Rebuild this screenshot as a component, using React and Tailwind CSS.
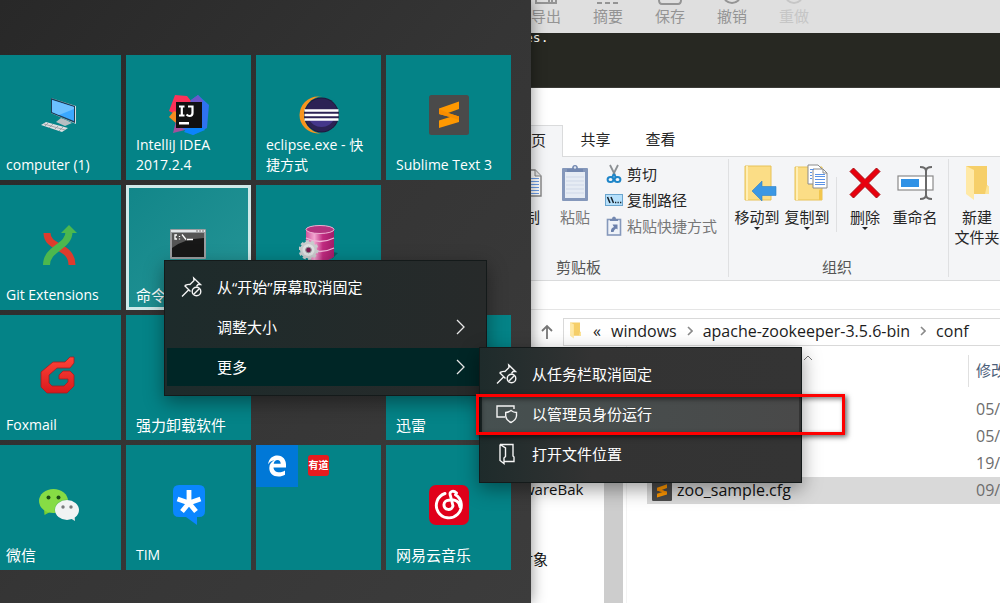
import React from "react";

/* ---------- tile icons (40 x 40) ---------- */

const ComputerIcon = () => (
  <svg width="40" height="40" viewBox="0 0 40 40">
    <path d="M12 3 37 11 V29 L12 18Z" fill="#d5dde0" />
    <path d="M12 3 36 11 V28 L12 18Z" fill="#1d3f59" />
    <path d="M13 5 35 12 V26 L13 17Z" fill="#3aa8ff" />
    <path d="M13 5 35 12 V14 L20 20 13 17Z" fill="#6cc1ff" />
    <path d="M22 23 27 25 33 28 26 31 17 27Z" fill="#b8bec2" />
    <path d="M7 27 29 33 23 37 2 30Z" fill="#dcdfe1" />
    <path d="M5 29 26 35M9 28 L6 31M14 29 L10 33M19 31 L15 35M24 32 L20 36" stroke="#8f979c" strokeWidth="0.8" />
  </svg>
);

const IntelliJIcon = () => (
  <svg width="40" height="40" viewBox="0 0 40 40">
    <path d="M6 0 18 1 27 12 12 22 0 16Z" fill="#fc3158" />
    <path d="M0 22 5 16 14 20 8 29Z" fill="#f68b1f" />
    <path d="M4 38 8 22 20 22 20 34Z" fill="#a5509c" />
    <path d="M22 5 29 0 40 10 38 33 24 40 13 33Z" fill="#2f72f0" />
    <path d="M22 5 29 0 34 6 24 16Z" fill="#6b57c8" />
    <path d="M17 34 33 31 36 35 24 40 15 37Z" fill="#0b84fb" />
    <rect x="7" y="7" width="26" height="26" fill="#111" />
    <path d="M10 11.500H15.500M12.800 11V20M10 20.500H15.500M23.500 10.500V18Q23.500 21 20.500 21Q19 21 17.500 19.500M19 11.500H24" stroke="#fff" strokeWidth="2.200" fill="none" />
    <rect x="10" y="27" width="10" height="2.500" fill="#fff" />
  </svg>
);

const EclipseIcon = () => (
  <svg width="40" height="40" viewBox="0 0 40 40">
    <circle cx="19" cy="20" r="18.500" fill="#f7941e" />
    <circle cx="24" cy="20" r="18.800" fill="#048387" />
    <circle cx="22.500" cy="20" r="17.500" fill="#1f1a3d" />
    <circle cx="22.500" cy="20" r="16.500" fill="#2c2255" />
    <path d="M10 24H35A13 11 0 0 1 10 24Z" fill="#45378b" />
    <path d="M5.500 15.500H39.500M5.500 20H39.500M5.500 24.500H39.500" stroke="#fff" strokeWidth="2.300" />
  </svg>
);

const SublimeIcon = ({ size = 40 }) => (
  <svg width={size} height={size} viewBox="0 0 40 40">
    <rect width="40" height="40" rx="2.500" fill="#4a4a4a" />
    <path d="M10 13.500 30 6.500V14L19 18 30 21.500V27L10 33V25.500L21 22 10 19Z" fill="#ff9800" />
    <path d="M10 19 21 22 30 25V21.500L19 18 10 14Z" fill="#f98d00" />
  </svg>
);

const GitIcon = () => (
  <svg width="40" height="40" viewBox="0 0 40 40">
    <path d="M8 8C8 24 33 20 33 40" stroke="#dd3b2d" strokeWidth="7" fill="none" />
    <path d="M7.500 40C7.500 23 30 22 30 7" stroke="#4cb84e" strokeWidth="7" fill="none" />
    <path d="M30 0 38 8H22Z" fill="#4cb84e" />
  </svg>
);

const CmdIcon = () => (
  <svg width="40" height="40" viewBox="0 0 40 40">
    <rect x="1" y="4" width="36" height="30" rx="1" fill="#9a9da0" />
    <rect x="2" y="5" width="34" height="2" fill="#e3e6e8" />
    <rect x="3" y="8" width="32" height="24" fill="#171717" />
    <path d="M3 8H35V13Q14 14 3 23Z" fill="#555" />
    <path d="M8 10H6V14H8M10.500 11V12M10.500 13.500V14.500M13 9.500 17 14.500M18 14.500H24" stroke="#fff" strokeWidth="1.300" fill="none" />
    <path d="M27 6H29M30 6H32M33 6H35" stroke="#777" />
  </svg>
);

const DatabaseIcon = () => (
  <svg width="40" height="40" viewBox="0 0 40 40">
    <defs>
      <linearGradient id="db" x1="0" x2="1">
        <stop offset="0" stopColor="#d0559c" />
        <stop offset=".3" stopColor="#f2a4d0" />
        <stop offset=".6" stopColor="#c02a80" />
        <stop offset="1" stopColor="#a21c68" />
      </linearGradient>
    </defs>
    <path d="M33 34 39 28 34 27Z" fill="#055d63" />
    <path d="M7 4V32Q21 41 35 32V4Z" fill="url(#db)" />
    <ellipse cx="21" cy="4.500" rx="14" ry="4" fill="#b2347f" stroke="#eeb0d3" />
    <path d="M7 13Q21 20 35 13M7 23Q21 30 35 23" stroke="#efb4d6" strokeWidth="1.300" fill="none" />
    <circle cx="9.500" cy="25" r="8.500" fill="#c9cccd" stroke="#c9cccd" strokeWidth="3" strokeDasharray="3 2.300" />
    <circle cx="9.500" cy="25" r="6" fill="#dfe1e2" />
    <circle cx="9.500" cy="25" r="2.800" fill="#7b1b50" stroke="#8e9193" />
  </svg>
);

const FoxmailIcon = () => (
  <svg width="40" height="40" viewBox="0 0 40 40">
    <defs>
      <linearGradient id="fox" x1="0" y1="0" x2="0" y2="1">
        <stop offset="0" stopColor="#ff4438" />
        <stop offset="1" stopColor="#d9191c" />
      </linearGradient>
    </defs>
    <path d="M35 2V8L31 13H18L10 20V28L13 31H25L29 27V24H20V20L24 16H31L35 20V31L28 38H8L2 32V17L14 7H26L31 2Z" fill="url(#fox)" stroke="#9e2024" strokeWidth=".8" />
  </svg>
);

const WeChatIcon = () => (
  <svg width="40" height="40" viewBox="0 0 40 40">
    <path d="M5 24 5.500 30 11 27Z" fill="#79cf2f" />
    <ellipse cx="14.500" cy="16" rx="14.500" ry="12" fill="#86dc45" />
    <ellipse cx="28" cy="25" rx="12.500" ry="10.500" fill="#048387" opacity=".25" />
    <path d="M31 33 36 36 35.500 30Z" fill="#e4e7e8" />
    <ellipse cx="28" cy="25" rx="12" ry="10" fill="#f1f3f3" />
    <circle cx="9.500" cy="12.500" r="2" fill="#1c4d17" />
    <circle cx="19.500" cy="12.500" r="2" fill="#1c4d17" />
    <circle cx="24" cy="22" r="1.700" fill="#777b7b" />
    <circle cx="32" cy="22" r="1.700" fill="#777b7b" />
  </svg>
);

const TimIcon = () => (
  <svg width="40" height="40" viewBox="0 0 40 40">
    <path d="M10 0H30Q36 0 36 6V26Q36 32 30 32H28V40L17 32H10Q4 32 4 26V6Q4 0 10 0Z" fill="#0a86ff" />
    <path d="M20 18V5M20 18 8.500 14M20 18 31.500 14M20 18 13 26.500M20 18 27 26.500" stroke="#fff" strokeWidth="4.800" />
  </svg>
);

const NetEaseIcon = () => (
  <svg width="40" height="40" viewBox="0 0 40 40">
    <rect width="40" height="40" rx="7" fill="#e0001b" />
    <path d="M16.500 9.500A12.500 12.500 0 1 0 27 10.800M28 9C25 6 20 7 22 12L24.500 22A4.600 4.600 0 1 1 20 16.300C26 14.500 31.500 18 31.500 23" transform="translate(-0.500 -1)" stroke="#fff" strokeWidth="2.900" fill="none" strokeLinecap="round" />
  </svg>
);

const EdgeIcon = () => (
  <svg width="20" height="22" viewBox="0 0 20 22">
    <path d="M1 9.500C2 3 6 .5 10.500.5C16 .5 19 5 19 9.500V12.500H6.500C6.800 16 9.500 17.300 12 17.300C14.500 17.300 16.500 16.500 18 15.500V19.700C16 20.900 13.800 21.500 11.500 21.500C6 21.500 2.300 18 2.300 13C2.300 9 4.500 6.500 7.500 5.200C4.500 5.500 2.500 7 1 9.500ZM6.700 8.800H13.700C13.700 6.500 12.500 5 10.500 5C8.500 5 7 6.500 6.700 8.800Z" fill="#fff" />
  </svg>
);

/* ---------- ribbon and window icons ---------- */

const Clipboard = () => (
  <svg width="28" height="38" viewBox="0 0 28 38">
    <rect x="1" y="4" width="26" height="33" rx="1" fill="#8598bb" />
    <rect x="4" y="8" width="20" height="26" fill="#e6ecf4" />
    <path d="M5 13H23M5 17H23M5 21H23M5 25H23M5 29H23" stroke="#cfd8e8" />
    <path d="M6 8V5H11Q11 1 14 1Q17 1 17 5H22V8Z" fill="#7388b0" />
    <circle cx="14" cy="3.500" r="1.200" fill="#dfe6f2" />
  </svg>
);

const CopyDoc = () => (
  <svg width="22" height="28" viewBox="0 0 22 28">
    <path d="M1 1H13L19 7V27H1Z" fill="#fff" stroke="#848484" strokeWidth="1.400" />
    <path d="M13 1V7H19" fill="#e6e6e6" stroke="#848484" />
    <path d="M3 9.500H17M3 12.500H17M3 15.500H17M3 18.500H17M3 21.500H17M3 24.500H17" stroke="#6d9ee8" />
  </svg>
);

const Scissors = () => (
  <svg width="18" height="20" viewBox="0 0 18 20">
    <path d="M5 1 10 11M13 1 8 11" stroke="#8b8f93" strokeWidth="1.800" fill="none" />
    <ellipse cx="5.500" cy="15.500" rx="2.900" ry="2.500" fill="none" stroke="#1e85c8" strokeWidth="2" />
    <ellipse cx="12.500" cy="15.500" rx="2.900" ry="2.500" fill="none" stroke="#1e85c8" strokeWidth="2" />
    <path d="M9 10 7 13.500M9 10 11 13.500" stroke="#1e85c8" strokeWidth="2" />
  </svg>
);

const PathIcon = () => (
  <svg width="18" height="12" viewBox="0 0 18 12">
    <rect x=".5" y=".5" width="17" height="11" fill="#b6e0fb" stroke="#6aa5ce" />
    <path d="M2.500 3 5 9M6 3 8.500 9" stroke="#16222c" strokeWidth="1.500" />
    <path d="M10 8.500H11.300M12.500 8.500H13.800M15 8.500H16.300" stroke="#16222c" strokeWidth="1.300" />
  </svg>
);

const PasteShortcut = () => (
  <svg width="16" height="20" viewBox="0 0 16 20">
    <rect x="1.500" y="3.500" width="13" height="15.500" fill="#eef2f8" stroke="#8598bb" strokeWidth="1.600" />
    <path d="M4 5V3H6Q6 .5 8 .5Q10 .5 10 3H12V5Z" fill="#7388b0" />
    <path d="M5 16Q4.500 12 8 11L6.500 8.500H11.500V13.500L10 12.500Q8 13.500 7.500 16Z" fill="#6b80ab" />
  </svg>
);

const MoveFolder = () => (
  <svg width="34" height="38" viewBox="0 0 34 38" className="ml-2">
    <path d="M1 2H27V36H5L1 36Z" fill="#fbdd86" stroke="#e7c257" />
    <path d="M2 2H4V36H2Z" fill="#ffefb5" />
    <path d="M8 27 18 17V22.500H32V31.500H18V37Z" fill="#3b97e3" stroke="#2a7fc8" strokeWidth=".6" />
  </svg>
);

const CopyFolder = () => (
  <svg width="34" height="38" viewBox="0 0 34 38" className="ml-2">
    <path d="M1 3H28V36H1Z" fill="#fbdd86" stroke="#e7c257" />
    <path d="M2 3H4V36H2Z" fill="#ffefb5" />
    <path d="M25 36V27Q25 25 28 25V36Z" fill="#f2c64e" />
    <path d="M14 1H24L28 5V20H14Z" fill="#fff" stroke="#8b8b8b" />
    <path d="M19 5H29L33 9V24H19Z" fill="#fff" stroke="#8b8b8b" />
    <path d="M29 5V9H33" fill="none" stroke="#8b8b8b" />
    <path d="M16 5.500H20M16 8.500H18M16 11.500H18M16 14.500H18M21 10.500H31M21 12.500H31M21 15.500H31M21 18.500H31M21 20.500H31" stroke="#5b93e6" />
  </svg>
);

const DeleteX = () => (
  <svg width="32" height="32" viewBox="0 0 32 32">
    <path d="M4.500 1 16 12.500 27.500 1 31 4.500 19.500 16 31 27.500 27.500 31 16 19.500 4.500 31 1 27.500 12.500 16 1 4.500Z" fill="#e8000d" stroke="#a80c12" />
  </svg>
);

const RenameIcon = () => (
  <svg width="38" height="34" viewBox="0 0 38 34" className="ml-[2px]">
    <rect x="1" y="10" width="35" height="14" fill="#fff" stroke="#8a8a8a" strokeWidth="1.200" />
    <rect x="4" y="13" width="18" height="8" fill="#2f91e5" />
    <path d="M23 1Q29 1 29 5Q29 1 35 1M29 4V30M23 33Q29 33 29 29Q29 33 35 33" stroke="#6a6a6a" strokeWidth="2" fill="none" />
  </svg>
);

const Folder = ({ w = 25, h = 36 }) => (
  <svg width={w} height={h} viewBox="0 0 25 36">
    <path d="M1 1H22V20L24 22V29H5Z" fill="#f6cf69" />
    <path d="M22 20 24 22V29H20Z" fill="#fde59a" />
    <path d="M1 1 9 5V35L1 29Z" fill="#ffe9a6" />
  </svg>
);

const UnpinIcon = () => (
  <svg width="22" height="22" viewBox="0 0 22 22" fill="none" stroke="#f4f4f4" strokeWidth="1.400">
    <path d="M1 20.500 7.500 14M3.500 9.500 9.500 15.500M4 9.500Q7.500 8 9 8.500L13 4.500L12.700 2 19.500 8.500 17 8.500 15.500 10.500" />
    <circle cx="15.500" cy="15.500" r="4.300" />
    <path d="M12.500 18.500 18.500 12.500" />
  </svg>
);

const AdminIcon = () => (
  <svg width="22" height="20" viewBox="0 0 22 20" fill="none" stroke="#f4f4f4" strokeWidth="1.400">
    <path d="M9 13H1V2H18V5" />
    <path d="M15 6.500Q17.500 8.500 20.500 8.500V12Q20 16 15 18.500Q10 16 9.700 12V8.500Q12.500 8.500 15 6.500Z" />
  </svg>
);

const LocationIcon = () => (
  <svg width="18" height="22" viewBox="0 0 18 22" fill="none" stroke="#f4f4f4" strokeWidth="1.400">
    <path d="M2 1.500H15V13L16 14V18.500H6M2 1.500V17.500L6 20.500V15L7.500 13.500V5L2 1.500" />
  </svg>
);

const Chevron = () => (
  <svg width="10" height="16" viewBox="0 0 10 16" fill="none" stroke="#e8e8e8" strokeWidth="1.300">
    <path d="M1 1 8 8 1 15" />
  </svg>
);

/* ---------- start menu ---------- */

const tiles = [
  { label: "computer (1)", icon: <ComputerIcon /> },
  { label: "IntelliJ IDEA 2017.2.4", icon: <IntelliJIcon /> },
  { label: "eclipse.exe - 快捷方式", icon: <EclipseIcon /> },
  { label: "Sublime Text 3", icon: <SublimeIcon /> },
  { label: "Git Extensions", icon: <GitIcon /> },
  { label: "命令", icon: <CmdIcon />, selected: true, cjk: true },
  { icon: <DatabaseIcon /> },
  null,
  { label: "Foxmail", icon: <FoxmailIcon /> },
  { label: "强力卸载软件", cjk: true },
  null,
  { label: "迅雷", cjk: true },
  { label: "微信", icon: <WeChatIcon />, cjk: true },
  { label: "TIM", icon: <TimIcon /> },
  { folder: true },
  { label: "网易云音乐", icon: <NetEaseIcon />, cjk: true },
];

function Tile({ tile }) {
  if (!tile) return <div />;
  if (tile.folder) {
    return (
      <div className="flex h-[125px] items-start bg-[#048387]">
        <button aria-label="Edge" className="flex size-[42px] items-center justify-center bg-[#0078d7]">
          <EdgeIcon />
        </button>
        <button className="mt-[10px] ml-[10px] flex size-[21px] items-center justify-center rounded-[3px] bg-[#e61b1e] text-[10px] font-bold whitespace-nowrap">
          有道
        </button>
      </div>
    );
  }
  return (
    <button
      className={
        "relative flex h-[125px] flex-col justify-end px-[10px] pb-[5px] text-left leading-5 text-white " +
        (tile.cjk ? "text-[15px] " : "text-[14px] ") +
        (tile.selected
          ? "bg-linear-to-br from-[#118689] to-[#259597] outline-3 -outline-offset-3 outline-[#cfe9e9]"
          : "bg-[#048387]")
      }
    >
      {tile.icon && <span className="absolute inset-x-0 top-10 flex justify-center">{tile.icon}</span>}
      <span className="relative">{tile.label}</span>
    </button>
  );
}

function StartMenu() {
  return (
    <section className="z-10 w-[531px] shrink-0 overflow-hidden bg-linear-to-br from-[#282828] via-[#353535] to-[#3c3c3c] pt-[55px] shadow-[0_0_14px_rgba(0,0,0,0.45)]">
      <div className="-ml-1 grid grid-cols-[repeat(4,125px)] gap-[5px]">
        {tiles.map((t, i) => (
          <Tile key={i} tile={t} />
        ))}
      </div>
    </section>
  );
}

/* ---------- menus ---------- */

function MenuItem({ icon, label, more, className = "" }) {
  return (
    <button role="menuitem" className={"flex h-[38px] w-full items-center text-left text-[15px] text-white " + className}>
      <span className="flex w-[50px] shrink-0 items-center justify-center">{icon}</span>
      <span className="flex-1">{label}</span>
      {more && (
        <span className="pr-[18px]">
          <Chevron />
        </span>
      )}
    </button>
  );
}

const menuBox =
  "absolute z-20 flex w-[323px] flex-col gap-[2px] border border-[#141a1a] px-[2px] pt-[7px] pb-[9px] shadow-[0_6px_18px_rgba(0,0,0,0.4)] ";

function ContextMenus() {
  return (
    <>
      <div role="menu" className={menuBox + "top-[260px] left-[164px] bg-linear-to-r from-[#1d2b2b] to-[#272a2a]"}>
        <MenuItem icon={<UnpinIcon />} label="从“开始”屏幕取消固定" />
        <MenuItem label="调整大小" more />
        <MenuItem label="更多" more className="bg-[#002626]" />
      </div>
      <div role="menu" className={menuBox + "top-[347px] left-[479px] bg-linear-to-r from-[#1e2b2b] via-[#333333] via-35% to-[#343434]"}>
        <MenuItem icon={<UnpinIcon />} label="从任务栏取消固定" />
        <MenuItem icon={<AdminIcon />} label="以管理员身份运行" className="bg-linear-to-r from-[#465050] to-[#494949]" />
        <MenuItem icon={<LocationIcon />} label="打开文件位置" />
      </div>
      <div className="pointer-events-none absolute top-[394px] left-[476px] z-30 h-[41px] w-[369px] border-3 border-[#fe0000] shadow-[2px_2px_5px_rgba(0,0,0,0.6),inset_2px_2px_5px_rgba(0,0,0,0.5)]" />
    </>
  );
}

/* ---------- editor behind ---------- */

function EditorToolbar() {
  const s = { fill: "none", stroke: "currentColor", strokeWidth: 2 };
  const items = [
    ["导出", <path d="M2 0V3H22V0M15 0V2M18 0V2" {...s} />],
    ["摘要", <path d="M1 3H6M9 3H14M17 3H22" {...s} />],
    ["保存", <path d="M1 0Q1 4 4 4H20Q23 4 23 0" {...s} />],
    ["撤销", <path d="M5 0Q12 6 19 0" {...s} />],
    ["重做", <path d="M5 0Q12 6 19 0" {...s} />],
  ];
  return (
    <div className="flex h-[33px] gap-8 bg-[#dfdfdf]">
      {items.map(([label, art], i) => (
        <button
          key={label}
          disabled={i === 4}
          className="flex w-[30px] shrink-0 flex-col items-center text-[15px] leading-[23px] whitespace-nowrap text-[#949494] disabled:text-[#c6c6c6]"
        >
          <svg width="24" height="5" viewBox="0 0 24 5">{art}</svg>
          {label}
        </button>
      ))}
    </div>
  );
}

/* ---------- explorer ---------- */

function BigButton({ icon, label, arrow, className = "w-[50px]" }) {
  return (
    <button className={"flex shrink-0 flex-col items-center whitespace-nowrap " + className}>
      <span className="flex h-11 items-center">{icon}</span>
      <span className="mt-[2px] leading-5">{label}</span>
      {arrow && (
        <svg width="6" height="3" viewBox="0 0 6 3">
          <path d="M0 0H6L3 3Z" fill="#222" />
        </svg>
      )}
    </button>
  );
}

function SmallButton({ icon, label, className = "" }) {
  return (
    <button className={"flex h-[26px] items-center gap-1 whitespace-nowrap " + className}>
      <span className="flex w-[18px] justify-center">{icon}</span>
      {label}
    </button>
  );
}

function Ribbon() {
  return (
    <div className="flex h-[124px] border-b border-[#dadbdc] bg-[#f4f5f7] pt-[2px] pb-[3px] text-[15px] text-[#262626]">
      <div className="flex w-[198px] shrink-0 flex-col justify-between border-r border-[#dfe0e2]">
        <div className="flex pt-[2px]">
          <BigButton icon={<CopyDoc />} label="制" className="-ml-3 w-[27px]" />
          <BigButton icon={<Clipboard />} label="粘贴" className="ml-1 w-[50px] text-[#777]" />
          <div className="ml-[5px] flex flex-col">
            <SmallButton icon={<Scissors />} label="剪切" />
            <SmallButton icon={<PathIcon />} label="复制路径" />
            <SmallButton icon={<PasteShortcut />} label="粘贴快捷方式" className="text-[#777]" />
          </div>
        </div>
        <div className="pl-[25px] leading-5 text-[#555]">剪贴板</div>
      </div>
      <div className="flex w-[220px] shrink-0 flex-col justify-between border-r border-[#dfe0e2]">
        <div className="flex pt-[2px] pl-[3px]">
          <BigButton icon={<MoveFolder />} label="移动到" arrow />
          <BigButton icon={<CopyFolder />} label="复制到" arrow />
          <div className="mt-4 mr-[3px] ml-1 h-[55px] w-px bg-[#dfe0e2]" />
          <BigButton icon={<DeleteX />} label="删除" arrow />
          <BigButton icon={<RenameIcon />} label="重命名" />
        </div>
        <div className="pr-[3px] text-center leading-5 text-[#555]">组织</div>
      </div>
      <div className="pt-[2px] pl-[3px]">
        <BigButton
          icon={<Folder />}
          label={
            <>
              新建
              <br />
              文件夹
            </>
          }
        />
      </div>
    </div>
  );
}

function AddressBar() {
  const sep = (
    <svg width="6" height="10" viewBox="0 0 6 10" className="shrink-0">
      <path d="M1 1 5 5 1 9" fill="none" stroke="#8a8a8a" strokeWidth="1.600" />
    </svg>
  );
  return (
    <div className="flex h-[36px] items-center pt-[7px]">
      <button aria-label="up" className="flex w-8 shrink-0 justify-center">
        <svg width="12" height="16" viewBox="0 0 12 16">
          <path d="M6 15V2M1 7 6 2 11 7" fill="none" stroke="#777" strokeWidth="1.800" />
        </svg>
      </button>
      <nav className="flex h-7 flex-1 items-center border border-r-0 border-[#d9d9d9] pb-[2px] pl-[5px] text-[16px] whitespace-nowrap text-[#1c1c1c]">
        <Folder w={13} h={17} />
        <span className="ml-[11px] w-[18px]">«</span>
        <a href="#windows">windows</a>
        <span className="mx-[10px]">{sep}</span>
        <a href="#zookeeper">apache-zookeeper-3.5.6-bin</a>
        <span className="mx-[10px]">{sep}</span>
        <a href="#conf">conf</a>
      </nav>
    </div>
  );
}

const rows = [
  { date: "05/" },
  { date: "05/" },
  { date: "19/" },
  { name: "zoo_sample.cfg", date: "09/", selected: true },
];

function FileArea() {
  return (
    <div className="flex flex-1">
      <div className="flex w-[73px] shrink-0 flex-col overflow-hidden pt-[129px] text-[15px] whitespace-nowrap text-[#111]">
        <div className="-ml-2 h-[70px] leading-7">wareBak</div>
        <div className="-ml-[13px] leading-7">对象</div>
      </div>
      <div className="mt-1 w-[19px] shrink-0 bg-[#cdcdcd]" />
      <div className="ml-[3px] w-[21px] shrink-0 border-l border-[#f3f3f3]" />
      <div className="min-w-0 flex-1 overflow-hidden">
        <table className="w-full table-fixed border-collapse text-left">
          <thead>
            <tr className="h-[50px]">
              <th className="w-[321px] p-0 align-top font-normal">
                <svg width="10" height="6" viewBox="0 0 10 6" className="mx-auto mt-[9px]">
                  <path d="M1 5 5 1 9 5" fill="none" stroke="#777" />
                </svg>
              </th>
              <th className="p-0 text-[15px] font-normal text-[#4c607a]">
                <div className="h-8 border-l border-[#e0e0e0] pl-[7px] leading-[30px] whitespace-nowrap">修改</div>
              </th>
            </tr>
          </thead>
          <tbody>
            {rows.map((r, i) => (
              <tr key={i} className={"h-[27px] text-[16px] " + (r.selected ? "bg-[#d9d9d9]" : "")}>
                <td className="p-0">
                  {r.name && (
                    <span className="flex items-center gap-[5px] pl-[5px] leading-[27px] text-[#111]">
                      <SublimeIcon size={20} />
                      {r.name}
                    </span>
                  )}
                </td>
                <td className="p-0 pl-2 leading-[27px] whitespace-nowrap text-[#6d6d6d]">{r.date}</td>
              </tr>
            ))}
          </tbody>
        </table>
      </div>
    </div>
  );
}

function Explorer() {
  return (
    <section className="flex flex-1 flex-col bg-white">
      <div className="mt-[37px] flex text-[15px] text-[#262626]">
        <button className="h-8 w-8 border-t border-r border-[#dadbdc] bg-[#f4f5f7] pb-[3px] text-left">页</button>
        <button className="h-8 w-[65px] border-b border-[#dadbdc] pb-[2px]">共享</button>
        <button className="h-8 w-[65px] border-b border-[#dadbdc] pb-[2px]">查看</button>
        <div className="flex-1 border-b border-[#dadbdc]" />
      </div>
      <Ribbon />
      <div className="h-[29px] shrink-0 border-b border-[#e5e5e5]" />
      <AddressBar />
      <FileArea />
    </section>
  );
}

export default function App() {
  return (
    <main className="relative flex min-h-screen overflow-hidden bg-white font-['Open_Sans','Noto_Sans_CJK_SC',sans-serif] text-white">
      <StartMenu />
      <div className="flex min-w-0 flex-1 flex-col overflow-hidden">
        <EditorToolbar />
        <div className="h-[55px] shrink-0 overflow-hidden border-b border-[#3c3c38] bg-[#272822]">
          <pre className="-ml-[6px] font-['DejaVu_Sans_Mono',monospace] text-[13px] leading-[10px] text-[#f8f8f2]">es.</pre>
        </div>
        <Explorer />
      </div>
      <ContextMenus />
    </main>
  );
}
